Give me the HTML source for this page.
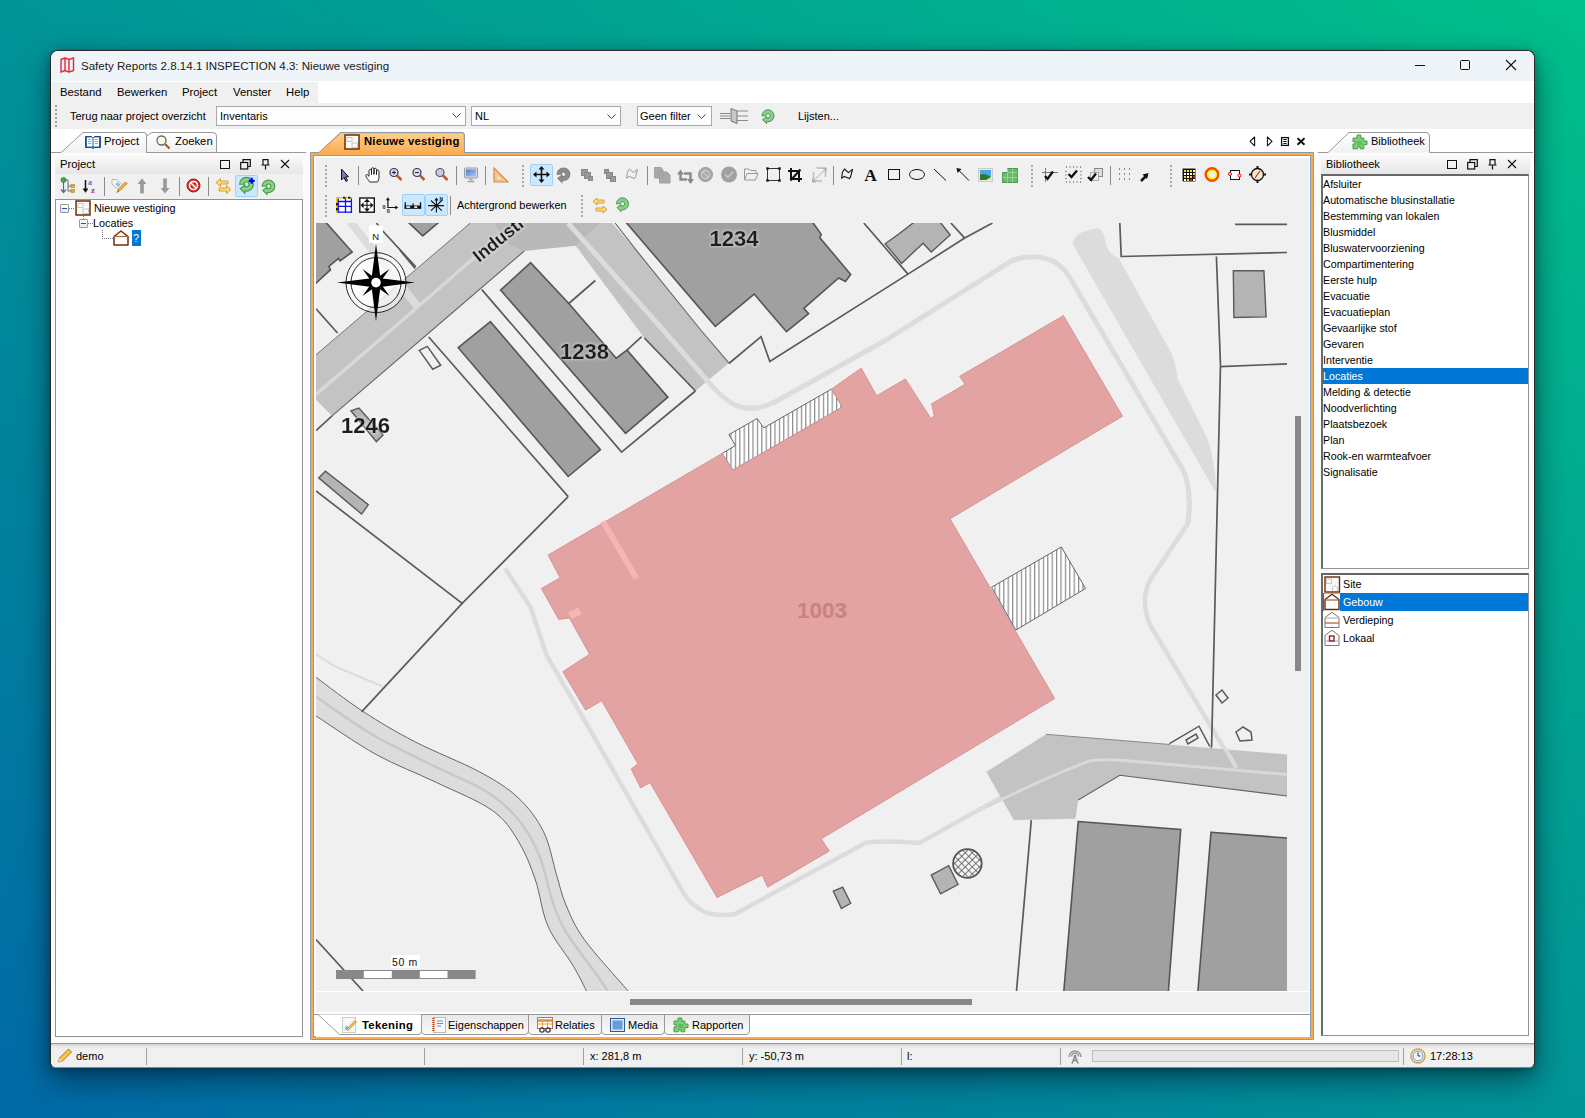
<!DOCTYPE html>
<html><head><meta charset="utf-8">
<style>
*{margin:0;padding:0;box-sizing:border-box}
html,body{width:1585px;height:1118px;overflow:hidden}
body{position:relative;font-family:"Liberation Sans",sans-serif;font-size:11px;color:#000;
background:linear-gradient(to bottom left,#00C08A 0%,#00A990 25%,#009497 50%,#007F9E 75%,#0069A7 100%);}
.a{position:absolute}
.t{position:absolute;white-space:nowrap;line-height:13px}
svg.i{position:absolute;overflow:visible}
#win{left:50px;top:50px;width:1485px;height:1018px;border:1px solid #2a2a2a;border-bottom-color:#8a8580;border-radius:8px 8px 6px 6px;background:#fcfcfc;
box-shadow:0 12px 30px rgba(0,20,40,.55),0 2px 8px rgba(0,0,0,.3)}
</style></head><body>
<svg width="0" height="0" style="position:absolute"><defs>
<symbol id="ref" viewBox="0 0 20 20"><path d="M4 9.8A6 6 0 1 1 10 15.8H8.6V17.7L4.6 13.6L8.6 10.6V12H10A2.2 2.2 0 1 0 7.8 9.8Z" fill="#8ccf8c" stroke="#3f9d3f" stroke-width="1"/></symbol>
<symbol id="refg" viewBox="0 0 20 20"><path d="M4 9.8A6 6 0 1 1 10 15.8H8.6V17.7L4.6 13.6L8.6 10.6V12H10A2.2 2.2 0 1 0 7.8 9.8Z" fill="#8c8c8c" stroke="#808080" stroke-width="1"/></symbol>
<symbol id="puz" viewBox="0 0 20 20"><path d="M3 5H7V2H10.8V5H13.8V8H17V11.6H13.8V15.8H10V13.6H7.8V15.8H3V11H5V8.7H3Z" fill="#7ccc7c" stroke="#45a045" stroke-width="1"/><rect x="7" y="8" width="5" height="4" fill="#62bb62"/></symbol>
</defs></svg>
<div id="win" class="a"></div>
<!-- title bar -->
<div class="a" style="left:51px;top:51px;width:1483px;height:30px;background:#eef4f8;border-radius:7px 7px 0 0"></div>
<div class="a" style="left:51px;top:81px;width:1483px;height:48px;background:#fff"></div>
<div class="a" style="left:51px;top:82px;width:267px;height:21px;background:#f0f0f0"></div>
<div class="a" style="left:51px;top:103px;width:1483px;height:26px;background:#f0f0f0"></div>
<div class="a" style="left:51px;top:129px;width:1483px;height:23px;background:#fff"></div>
<div class="t" style="left:81px;top:60px;font-size:11.55px;color:#1a1a1a">Safety Reports 2.8.14.1 INSPECTION 4.3: Nieuwe vestiging</div>

<!-- window controls -->
<div class="a" style="left:1415px;top:65px;width:10px;height:1px;background:#111"></div>
<div class="a" style="left:1460px;top:60px;width:10px;height:10px;border:1px solid #111;border-radius:1.5px"></div>
<svg class="i" style="left:1506px;top:60px" width="10" height="10"><path d="M0 0L10 10M10 0L0 10" stroke="#111" stroke-width="1.1"/></svg>
<!-- app icon -->
<svg class="i" style="left:60px;top:57px" width="15" height="16" viewBox="0 0 15 16"><path d="M1 2.5L5 0.8L9 2.5L13.5 0.8V13.5L9 15.2L5 13.5L1 15.2Z M5 0.8V13.5 M9 2.5V15.2" fill="none" stroke="#e0283a" stroke-width="1.4" stroke-linejoin="round"/></svg>
<!-- toolbar grip -->
<div class="a" style="left:55px;top:105px;width:2px;height:22px;background:repeating-linear-gradient(#a0a0a0 0 2px,transparent 2px 4px)"></div>
<div class="t" style="left:70px;top:110px">Terug naar project overzicht</div>
<div class="a" style="left:216px;top:106px;width:250px;height:20px;border:1px solid #a9a9a9;background:#fdfdfd"></div>
<div class="t" style="left:220px;top:110px">Inventaris</div>
<svg class="i" style="left:452px;top:113px" width="9" height="6"><path d="M0.5 0.5L4.5 4.5L8.5 0.5" fill="none" stroke="#444" stroke-width="1"/></svg>
<div class="a" style="left:471px;top:106px;width:150px;height:20px;border:1px solid #a9a9a9;background:#fdfdfd"></div>
<div class="t" style="left:475px;top:110px">NL</div>
<svg class="i" style="left:607px;top:114px" width="9" height="6"><path d="M0.5 0.5L4.5 4.5L8.5 0.5" fill="none" stroke="#444" stroke-width="1"/></svg>
<div class="a" style="left:637px;top:106px;width:75px;height:20px;border:1px solid #a9a9a9;background:#fdfdfd"></div>
<div class="t" style="left:640px;top:110px">Geen filter</div>
<svg class="i" style="left:697px;top:114px" width="9" height="6"><path d="M0.5 0.5L4.5 4.5L8.5 0.5" fill="none" stroke="#444" stroke-width="1"/></svg>
<svg class="i" style="left:720px;top:108px" width="28" height="16" viewBox="0 0 28 16"><path d="M0 5.5H10M0 8H10M0 10.5H10M17 3H28M17 8H28M17 12.5H28" stroke="#8a8a8a" stroke-width="1"/><path d="M11 0.5L17 3V15.5L11 13Z" fill="#c8c8c8" stroke="#777" stroke-width="1"/></svg>
<svg class="i" style="left:758px;top:106px" width="20" height="20"><use href="#ref"/></svg>
<div class="t" style="left:798px;top:110px">Lijsten...</div>

<div class="t" style="left:60px;top:86px;font-size:11.3px">Bestand</div>
<div class="t" style="left:117px;top:86px;font-size:11.3px">Bewerken</div>
<div class="t" style="left:182px;top:86px;font-size:11.3px">Project</div>
<div class="t" style="left:233px;top:86px;font-size:11.3px">Venster</div>
<div class="t" style="left:286px;top:86px;font-size:11.3px">Help</div>
<!-- MARK:TOOLBAR -->
<!-- MARK:TABS -->

<!-- left tabs -->
<svg class="i" style="left:51px;top:128px" width="260" height="26" viewBox="51 128 260 26">
<defs><linearGradient id="tabg" x1="0" y1="0" x2="0" y2="1"><stop offset="0" stop-color="#ffffff"/><stop offset="1" stop-color="#f0f0f0"/></linearGradient></defs>
<path d="M61 152.5L83 132.5H144Q146.5 132.5 146.5 135V152.5" fill="url(#tabg)" stroke="#999" stroke-width="1"/>
<path d="M146.5 152.5V136L152 132.5H213Q216.5 132.5 216.5 136V152.5" fill="url(#tabg)" stroke="#999" stroke-width="1"/>
<path d="M51 152.5H61M146.5 152.5H306" stroke="#999" stroke-width="1"/>
</svg>
<svg class="i" style="left:85px;top:136px" width="16" height="13" viewBox="0 0 16 13"><path d="M0.5 0.5H6.5L8 2L9.5 0.5H15.5V11.5H9.5L8 12.5L6.5 11.5H0.5Z" fill="#2d6aa8" stroke="#1b4f86" stroke-width="1"/><rect x="2" y="1.5" width="5.5" height="9" fill="#fff"/><rect x="8.5" y="1.5" width="5.5" height="9" fill="#fff"/><path d="M3 3.5H6.5M3 5.5H6.5M3 7.5H6.5M9.5 3.5H13M9.5 5.5H13M9.5 7.5H13" stroke="#aaa" stroke-width="1"/></svg>
<div class="t" style="left:104px;top:135px;font-size:11.3px">Project</div>
<svg class="i" style="left:156px;top:135px" width="15" height="15" viewBox="0 0 15 15"><circle cx="5.5" cy="5.5" r="4.5" fill="#fdfbe8" stroke="#666" stroke-width="1.3"/><path d="M9 9L13.5 13.5" stroke="#9a5a30" stroke-width="2.2"/></svg>
<div class="t" style="left:175px;top:135px;font-size:11.3px">Zoeken</div>
<!-- left panel header -->
<div class="a" style="left:55px;top:155px;width:248px;height:19px;background:linear-gradient(#fafafa,#e6e6e6)"></div>
<div class="t" style="left:60px;top:158px;font-size:11.3px">Project</div>
<div class="a" style="left:220px;top:160px;width:10px;height:9px;border:1.3px solid #111"></div>
<svg class="i" style="left:240px;top:159px" width="11" height="11" viewBox="0 0 11 11"><path d="M3 3V0.7H10.3V7.5H8" fill="none" stroke="#111" stroke-width="1.2"/><rect x="0.7" y="3.5" width="7" height="6.5" fill="none" stroke="#111" stroke-width="1.2"/></svg>
<svg class="i" style="left:261px;top:159px" width="9" height="11" viewBox="0 0 9 11"><path d="M2 0.7H7V6H2Z M0.5 6H8.5 M4.5 6V10.5" fill="none" stroke="#111" stroke-width="1.2"/></svg>
<svg class="i" style="left:281px;top:160px" width="8" height="8"><path d="M0 0L8 8M8 0L0 8" stroke="#111" stroke-width="1.1"/></svg>
<!-- left toolbar -->
<div class="a" style="left:55px;top:174px;width:248px;height:25px;background:#f0f0f0"></div>
<svg class="i" style="left:60px;top:177px" width="16" height="17" viewBox="0 0 16 17"><circle cx="3.5" cy="3" r="2.5" fill="#4caf50" stroke="#2e7d32" stroke-width=".8"/><path d="M3.5 5V15M1 12.5L3.5 15.5L6 12.5" fill="none" stroke="#5a6a80" stroke-width="1.2"/><path d="M3.5 3H8V14H11M8 9H11" fill="none" stroke="#5a6a80" stroke-width="1"/><rect x="11" y="7.5" width="3.5" height="3" fill="#e0b030" stroke="#b08010" stroke-width=".6"/><rect x="11" y="12.5" width="3.5" height="3" fill="#e0b030" stroke="#b08010" stroke-width=".6"/></svg>
<svg class="i" style="left:83px;top:178px" width="16" height="16" viewBox="0 0 16 16"><path d="M2.5 2V13M0.5 10.5L2.5 13.5L4.5 10.5" fill="none" stroke="#111" stroke-width="1.5"/><text x="5" y="7" font-family="Liberation Serif" font-size="8" fill="#5577cc" font-weight="bold">a</text><text x="8" y="14.5" font-family="Liberation Serif" font-size="9" fill="#aa3399" font-weight="bold">z</text></svg>
<div class="a" style="left:104px;top:177px;width:1px;height:19px;background:#8a8a8a"></div>
<svg class="i" style="left:111px;top:178px" width="17" height="16" viewBox="0 0 17 16"><path d="M1 1.5H6L12 7.5L7.5 12L1 6Z" fill="#f4f4f4" stroke="#bbb" stroke-width="1"/><rect x="5" y="5" width="4" height="3" fill="#7ec0ea" transform="rotate(45 7 6.5)"/><path d="M6 14.5L8 10.5L14.5 4L16 5.5L9.5 12Z" fill="#f5c842" stroke="#c07020" stroke-width="1"/></svg>
<svg class="i" style="left:137px;top:178px" width="10" height="16" viewBox="0 0 10 16"><path d="M5 0.5L9.5 6H6.8V15.5H3.2V6H0.5Z" fill="#999"/></svg>
<svg class="i" style="left:160px;top:178px" width="10" height="16" viewBox="0 0 10 16"><path d="M5 15.5L9.5 10H6.8V0.5H3.2V10H0.5Z" fill="#999"/></svg>
<div class="a" style="left:179px;top:177px;width:1px;height:19px;background:#8a8a8a"></div>
<svg class="i" style="left:186px;top:178px" width="15" height="15" viewBox="0 0 15 15"><circle cx="7.5" cy="7.5" r="6.5" fill="#d82a2a" stroke="#a01818" stroke-width="1"/><circle cx="7.5" cy="7.5" r="4" fill="none" stroke="#fff" stroke-width="1.6"/><path d="M4.7 4.7L10.3 10.3" stroke="#fff" stroke-width="1.6"/></svg>
<div class="a" style="left:208px;top:177px;width:1px;height:19px;background:#8a8a8a"></div>
<svg class="i" style="left:215px;top:178px" width="17" height="16" viewBox="0 0 17 16"><path d="M1 4.5L5.5 0.5V3H13V6H5.5V8.5Z" fill="#f7d97a" stroke="#d09a30" stroke-width=".9"/><path d="M16 11.5L11.5 7.5V10H4V13H11.5V15.5Z" fill="#f7d97a" stroke="#d09a30" stroke-width=".9"/></svg>
<div class="a" style="left:235px;top:175px;width:23px;height:22px;background:#cce8ff;border:1px solid #99d1ff;border-radius:2px"></div>
<svg class="i" style="left:235px;top:173px" width="23" height="23" viewBox="0 0 20 20"><use href="#ref"/><path d="M14.5 4.2V9.4M11.9 6.8H17.1" stroke="#0000ee" stroke-width="1.9"/></svg>
<svg class="i" style="left:258px;top:176px" width="21" height="21" viewBox="0 0 20 20"><use href="#ref"/></svg>
<!-- tree -->
<div class="a" style="left:55px;top:199px;width:248px;height:838px;background:#fff;border:1px solid #8e9299"></div>
<div class="a" style="left:60px;top:204px;width:9px;height:9px;border:1px solid #9a9a9a;border-radius:1px;background:linear-gradient(#fff,#e8e8e8)"></div>
<div class="a" style="left:62px;top:208px;width:5px;height:1px;background:#3050b0"></div>
<div class="a" style="left:69px;top:208px;width:6px;height:1px;background:repeating-linear-gradient(90deg,#777 0 1px,transparent 1px 2px)"></div>
<svg class="i" style="left:75px;top:200px" width="16" height="16" viewBox="0 0 16 16"><rect x="1" y="1" width="14" height="14" fill="#fafafa" stroke="#6e2c08" stroke-width="1.5"/><rect x="3" y="3.5" width="5" height="4" fill="none" stroke="#bbb" stroke-width=".8"/><rect x="8" y="9" width="5.5" height="4.5" fill="none" stroke="#bbb" stroke-width=".8"/></svg>
<div class="t" style="left:94px;top:202px;font-size:10.8px">Nieuwe vestiging</div>
<div class="a" style="left:83px;top:216px;width:1px;height:3px;background:repeating-linear-gradient(#777 0 1px,transparent 1px 2px)"></div>
<div class="a" style="left:79px;top:219px;width:9px;height:9px;border:1px solid #9a9a9a;border-radius:1px;background:linear-gradient(#fff,#e8e8e8)"></div>
<div class="a" style="left:81px;top:223px;width:5px;height:1px;background:#3050b0"></div>
<div class="a" style="left:88px;top:223px;width:5px;height:1px;background:repeating-linear-gradient(90deg,#777 0 1px,transparent 1px 2px)"></div>
<div class="t" style="left:93px;top:217px;font-size:10.8px">Locaties</div>
<div class="a" style="left:102px;top:230px;width:1px;height:9px;background:repeating-linear-gradient(#777 0 1px,transparent 1px 2px)"></div>
<div class="a" style="left:102px;top:238px;width:11px;height:1px;background:repeating-linear-gradient(90deg,#777 0 1px,transparent 1px 2px)"></div>
<svg class="i" style="left:113px;top:230px" width="16" height="16" viewBox="0 0 16 16"><path d="M1 15V6.5L8 1L15 6.5V15Z" fill="#fff" stroke="#6e2c08" stroke-width="1.5" stroke-linejoin="round"/><path d="M1 6.5H15" stroke="#b07040" stroke-width="1.2"/></svg>
<div class="a" style="left:132px;top:230px;width:9px;height:16px;background:#0078d7"></div>
<div class="t" style="left:133px;top:232px;font-size:10.8px;color:#fff">?</div>


<!-- doc tab + frame -->
<svg class="i" style="left:306px;top:128px" width="1012" height="914" viewBox="306 128 1012 914">
<defs><linearGradient id="otab" x1="0" y1="0" x2="0" y2="1"><stop offset="0" stop-color="#ffd08e"/><stop offset="1" stop-color="#fbaa50"/></linearGradient></defs>
<path d="M310.5 1039.5V152.5H319L340.5 132.5H462Q464.5 132.5 464.5 135V152.5H1313.5V1039.5Z" fill="#fbaa50" stroke="#8d9aa8" stroke-width="1"/>
<path d="M320 153.5L340.8 133.5H462Q463.5 133.5 463.5 136V154H320Z" fill="url(#otab)"/>
<rect x="313.5" y="155.5" width="997" height="881" fill="#fff" stroke="#8d9aa8" stroke-width="1"/>
</svg>
<svg class="i" style="left:344px;top:134px" width="16" height="16" viewBox="0 0 16 16"><rect x="1" y="1" width="14" height="14" fill="#fafafa" stroke="#6e2c08" stroke-width="1.5"/><rect x="3" y="3.5" width="5" height="4" fill="none" stroke="#bbb" stroke-width=".8"/><rect x="8" y="9" width="5.5" height="4.5" fill="none" stroke="#bbb" stroke-width=".8"/></svg>
<div class="t" style="left:364px;top:135px;font-size:11.3px;font-weight:bold;letter-spacing:.2px">Nieuwe vestiging</div>
<!-- tab controls -->
<svg class="i" style="left:1249px;top:136px" width="60" height="12" viewBox="0 0 60 12"><path d="M5.6 1V9.8L1 5.4Z" fill="none" stroke="#111" stroke-width="1.1" stroke-linejoin="round"/><path d="M18.4 1V9.8L23 5.4Z" fill="none" stroke="#111" stroke-width="1.1" stroke-linejoin="round"/><rect x="32.6" y="1.6" width="6.8" height="7.8" fill="none" stroke="#111" stroke-width="1.3"/><path d="M34.3 3.5H37.7M34.3 5.5H37.7M34.3 7.5H37.7" stroke="#111" stroke-width="1"/><path d="M48.5 2.3L55.5 8.7M55.5 2.3L48.5 8.7" stroke="#111" stroke-width="1.9"/></svg>
<!-- toolbars area -->
<div class="a" style="left:316px;top:158px;width:993px;height:65px;background:#f0f0f0"></div>
<div class="a" style="left:325px;top:165px;width:2px;height:22px;background:repeating-linear-gradient(#a8a8a8 0 2px,transparent 2px 4px)"></div>
<div class="a" style="left:325px;top:195px;width:2px;height:22px;background:repeating-linear-gradient(#a8a8a8 0 2px,transparent 2px 4px)"></div>
<div class="a" style="left:522px;top:165px;width:2px;height:22px;background:repeating-linear-gradient(#a8a8a8 0 2px,transparent 2px 4px)"></div>
<div class="a" style="left:1031px;top:165px;width:2px;height:22px;background:repeating-linear-gradient(#a8a8a8 0 2px,transparent 2px 4px)"></div>
<div class="a" style="left:1170px;top:165px;width:2px;height:22px;background:repeating-linear-gradient(#a8a8a8 0 2px,transparent 2px 4px)"></div>
<div class="a" style="left:581px;top:195px;width:2px;height:22px;background:repeating-linear-gradient(#a8a8a8 0 2px,transparent 2px 4px)"></div>
<div class="a" style="left:358px;top:166px;width:1px;height:19px;background:#8a8a8a"></div>
<div class="a" style="left:456px;top:166px;width:1px;height:19px;background:#8a8a8a"></div>
<div class="a" style="left:485px;top:166px;width:1px;height:19px;background:#8a8a8a"></div>
<div class="a" style="left:647px;top:166px;width:1px;height:19px;background:#8a8a8a"></div>
<div class="a" style="left:833px;top:166px;width:1px;height:19px;background:#8a8a8a"></div>
<div class="a" style="left:1110px;top:166px;width:1px;height:19px;background:#8a8a8a"></div>
<div class="a" style="left:450px;top:196px;width:1px;height:19px;background:#8a8a8a"></div>
<div class="a" style="left:530px;top:164px;width:23px;height:22px;background:#cce8ff;border:1px solid #99d1ff;border-radius:2px"></div>
<div class="a" style="left:402px;top:194px;width:23px;height:22px;background:#cce8ff;border:1px solid #99d1ff;border-radius:2px"></div>
<div class="a" style="left:425px;top:194px;width:23px;height:22px;background:#cce8ff;border:1px solid #99d1ff;border-radius:2px"></div>
<svg class="i" style="left:316px;top:158px" width="993" height="65" viewBox="316 158 993 65">
<!-- row1 -->
<path d="M341.5 169V180L344 177.5L346 181.5L347.5 180.5L345.5 176.8H348.5Z" fill="#7a7ab8" stroke="#111" stroke-width="1"/>
<path transform="translate(365 166.5)" d="M4.8 15.5C3.4 13.6 1.2 10.8 0.8 9.4C0.5 8.2 1.8 7.6 2.7 8.5L4 9.8V4.2C4 2.6 6.5 2.6 6.5 4.2V8V2.4C6.5 0.8 9 0.8 9 2.4V8V3C9 1.4 11.5 1.4 11.5 3V8V4.8C11.5 3.2 14 3.2 14 4.8V10.5C14 12.8 13.2 14.4 12.4 15.5Z" fill="#fff" stroke="#111" stroke-width=".9" stroke-linejoin="round"/>
<circle cx="394" cy="172.5" r="4" fill="#dde" stroke="#335" stroke-width="1.2"/><path d="M397 175.5L401.5 180" stroke="#b06030" stroke-width="2.5"/><path d="M392 172.5H396M394 170.5V174.5" stroke="#224" stroke-width="1"/>
<circle cx="417" cy="172.5" r="4" fill="#dde" stroke="#335" stroke-width="1.2"/><path d="M420 175.5L424.5 180" stroke="#b06030" stroke-width="2.5"/><path d="M415 172.5H419" stroke="#224" stroke-width="1"/>
<circle cx="440" cy="172.5" r="4" fill="#c8c8e8" stroke="#556" stroke-width="1.2"/><path d="M443 175.5L447.5 180" stroke="#b06030" stroke-width="2.5"/>
<defs><linearGradient id="scr" x1="0" y1="0" x2="1" y2="1"><stop offset="0" stop-color="#4a7ed0"/><stop offset="1" stop-color="#a9cdf2"/></linearGradient></defs><rect x="464.5" y="168" width="13" height="10" rx="1" fill="#dcdcdc" stroke="#9a9a9a" stroke-width="1"/><rect x="466" y="169.5" width="10" height="7" fill="url(#scr)"/><path d="M469.5 179.5H472.5M467.5 181.5H474.5" stroke="#a0a0a0" stroke-width="1.5"/>
<path d="M494 182V168L508 182Z" fill="#f2c890" stroke="#d88a40" stroke-width="1.2"/><path d="M497.5 179V176L500.5 179Z" fill="#f0f0f0"/>
<path d="M541.5 167.5V181.5M534.5 174.5H548.5" stroke="#111" stroke-width="1.6"/><path d="M541.5 166L538.5 169.5H544.5ZM541.5 183L538.5 179.5H544.5ZM533 174.5L536.5 171.5V177.5ZM550 174.5L546.5 171.5V177.5Z" fill="#111"/>
<use href="#refg" x="553" y="164" width="21" height="21"/>
<rect x="581.5" y="169.5" width="6" height="6" fill="#999" stroke="#888"/><rect x="584.5" y="172.5" width="6" height="6" fill="#999" stroke="#888"/><rect x="588.5" y="176.5" width="4" height="4" fill="#999" stroke="#888"/>
<rect x="604.5" y="169.5" width="4" height="4" fill="#999" stroke="#888"/><rect x="606.5" y="172.5" width="6" height="6" fill="#999" stroke="#888"/><rect x="610.5" y="176.5" width="5" height="5" fill="#999" stroke="#888"/>
<path d="M629.5 169L633.5 172.6L637.5 169.4L635.6 176.8L634.5 178.6L629.3 176.4L626.6 178.2L627.4 172.3Z" fill="none" stroke="#9a9a9a" stroke-width="1" stroke-linejoin="round"/>
<path d="M654.5 167.5H661L663 170V178H654.5Z M659.5 172H667L670 175V183H659.5Z" fill="#a8a8a8" stroke="#a0a0a0" stroke-width="1"/>
<path d="M680.5 174V179.5H687M690.5 182V173.5H684" fill="none" stroke="#8a8a8a" stroke-width="2.4"/><path d="M680.5 169.5L677 174.5H684ZM690.5 184L687 179H694Z" fill="#8a8a8a"/>
<circle cx="705.5" cy="174.5" r="7" fill="#a8a8a8" stroke="#999" stroke-width="1"/><circle cx="705.5" cy="174.5" r="4" fill="none" stroke="#ccc" stroke-width="1.3"/><path d="M702.5 171.5L708.5 177.5" stroke="#ccc" stroke-width="1.3"/>
<circle cx="729" cy="174.5" r="8" fill="#a0a0a0"/><path d="M725 174.5L728 177.5L733 171.5" fill="none" stroke="#c4c4c4" stroke-width="1.8"/>
<path d="M744.5 180V169H749L750.5 170.5H756V173" fill="none" stroke="#999" stroke-width="1"/><path d="M744.5 180L747 173.5H758L755.5 180Z" fill="none" stroke="#999" stroke-width="1"/>
<rect x="767.5" y="168.5" width="12" height="12" fill="none" stroke="#222" stroke-width=".9"/><rect x="766.3" y="167.3" width="2.4" height="2.4" fill="#111"/><rect x="778.3" y="167.3" width="2.4" height="2.4" fill="#111"/><rect x="766.3" y="179.3" width="2.4" height="2.4" fill="#111"/><rect x="778.3" y="179.3" width="2.4" height="2.4" fill="#111"/>
<path d="M788 171H799V182M791 168V179H802M790.5 180.5L800.5 169.5" fill="none" stroke="#111" stroke-width="2"/>
<path d="M813.5 172V181H822" fill="none" stroke="#bbb" stroke-width="1.5"/><path d="M816.5 168H825.5V177" fill="none" stroke="#bbb" stroke-width="1.5"/><path d="M812.5 182L826 168.5M812.5 182V178.5M812.5 182H816M826 168.5H822.5M826 168.5V172" stroke="#aaa" stroke-width="1"/>
<path d="M844.5 169L848.5 172.6L852.5 169.4L850.6 176.8L849.5 178.6L844.3 176.4L841.6 178.2L842.4 172.3Z" fill="none" stroke="#111" stroke-width="1.1" stroke-linejoin="round"/>
<text x="864.2" y="180.8" font-family="Liberation Serif" font-weight="bold" font-size="17.5" fill="#111">A</text>
<rect x="888.5" y="169.5" width="11" height="10" fill="none" stroke="#111" stroke-width="1"/>
<ellipse cx="917" cy="174.5" rx="7.5" ry="5" fill="none" stroke="#111" stroke-width="1"/>
<path d="M934 169L946 180.5" stroke="#111" stroke-width="1"/>
<path d="M957.5 169L969 180.5" stroke="#111" stroke-width="1"/><path d="M956.5 168L961.5 169L957.5 173Z" fill="#111"/>
<rect x="978.5" y="168.5" width="14" height="13" fill="#e8e8e8" stroke="#ccc"/><rect x="980" y="170" width="11" height="10" fill="#4aa8e8"/><path d="M980 180V175C983 173 986 174 991 177V180Z" fill="#2a7a2a"/><path d="M986 180L991 177V180Z" fill="#e8e080"/>
<path d="M1007.5 168.5H1017.5V182.5H1002.5V172.5H1007.5Z" fill="#6cb86c" stroke="#4a9a4a" stroke-width="1"/><path d="M1002.5 177.5H1017.5M1007.5 172.5H1017.5M1007.5 168.5V182.5M1012.5 168.5V182.5" stroke="#9ad09a" stroke-width="1"/>
<path d="M1045.5 168V182M1042 172.5H1058" stroke="#777" stroke-width="1"/><path d="M1045 176L1047.5 179L1053 171.5" fill="none" stroke="#111" stroke-width="2.3"/>
<path d="M1066 167H1082M1066 182H1082" stroke="#333" stroke-width="1" stroke-dasharray="1 2.5"/><path d="M1066 171V179M1081 171V179" stroke="#333" stroke-width="1" stroke-dasharray="1 2.5"/><path d="M1068.5 174L1071.5 177L1077 170.5" fill="none" stroke="#111" stroke-width="2.3"/>
<rect x="1094.5" y="168.5" width="8" height="8" fill="#ddd" stroke="#888"/><rect x="1090.5" y="172.5" width="8" height="8" fill="#eee" stroke="#aaa"/><path d="M1088 177L1091 180L1096 173.5" fill="none" stroke="#111" stroke-width="2.3"/>
<path d="M1119 169H1131M1119 174H1131M1119 179H1131" stroke="#222" stroke-width="1" stroke-dasharray="1 4"/>
<path d="M1141 181L1147 175" stroke="#111" stroke-width="2.5"/><path d="M1148.5 173L1142.5 174.5L1147 179Z" fill="#111"/>
<rect x="1181.5" y="167.5" width="15" height="15" fill="#fff"/><rect x="1182.5" y="168.5" width="13" height="13" fill="#111"/>
<path d="M1184 170h2v2h-2zM1187 170h2v2h-2zM1190 170h2v2h-2zM1193 173h2v2h-2zM1184 176h2v2h-2zM1190 176h2v2h-2zM1187 179h2v2h-2z" fill="#f8e020"/><path d="M1187 173h2v2h-2zM1190 173h2v2h-2zM1184 173h2v2h-2zM1184 179h2v2h-2zM1193 179h2v2h-2zM1187 176h2v2h-2zM1193 170h2v2h-2z" fill="#fff"/><path d="M1190 179h2v2h-2zM1193 176h2v2h-2z" fill="#e02020"/>
<circle cx="1212" cy="174.5" r="6" fill="none" stroke="#f40" stroke-width="3"/><circle cx="1212" cy="174.5" r="4.2" fill="none" stroke="#ff0" stroke-width="1.8"/>
<rect x="1230.5" y="170.5" width="9" height="9" fill="#fff" stroke="#111"/><circle cx="1230" cy="174" r="1.5" fill="#fff" stroke="#d00"/><circle cx="1239.5" cy="175.5" r="1.5" fill="#fff" stroke="#d00"/>
<circle cx="1257.5" cy="174.5" r="6" fill="#f5ecd0" stroke="#111" stroke-width="1.3"/><path d="M1257.5 166V169M1257.5 180V183M1249 174.5H1252M1263 174.5H1266" stroke="#111" stroke-width="2"/><path d="M1255 178L1260 171" stroke="#e02020" stroke-width="1.2"/>
<!-- row2 -->
<rect x="336" y="197" width="16" height="16" fill="#f8c800"/><rect x="337.5" y="198.5" width="14.5" height="14.5" fill="#fff"/>
<path d="M338.3 198.5V213M345.5 198.5V213M351.4 198.5V213M337.5 201.5H352M337.5 206.4H352M337.5 212.1H352" stroke="#1010f0" stroke-width="1.3"/>
<rect x="348" y="196.8" width="2.4" height="1.8" fill="#111"/><rect x="343" y="196.8" width="2.4" height="1.8" fill="#111"/><rect x="336" y="203" width="1.8" height="2.4" fill="#111"/><rect x="336" y="208" width="1.8" height="2.4" fill="#111"/>
<rect x="359.8" y="198" width="14.5" height="14.2" fill="#fff" stroke="#111" stroke-width="1.4"/>
<path d="M367 200V210.5M361.5 205.3H372.5" stroke="#111" stroke-width="1.1"/><path d="M367 198.8L364 202H370ZM367 211.8L364 208.6H370ZM360.6 205.3L363.6 202.3V208.3ZM373.4 205.3L370.4 202.3V208.3Z" fill="#111"/>
<path d="M387.9 199V207.5H396.5" fill="none" stroke="#111" stroke-width="1.2"/><path d="M387.9 197.2L385.9 200.2H389.9ZM398.3 207.5L395.3 205.5V209.5Z" fill="#111"/>
<text x="382.6" y="209" font-size="5.5" font-weight="bold" font-family="Liberation Sans" fill="#111">0</text><text x="386.8" y="212.8" font-size="5.5" font-weight="bold" font-family="Liberation Sans" fill="#111">0</text>
<path d="M405.3 202.2V208.7M420.5 202.2V208.7M413.1 203.4V206" stroke="#111" stroke-width="1.3"/><rect x="404.7" y="205.5" width="16.4" height="3.3" fill="#111"/><rect x="406.3" y="206.3" width="3.8" height="1.6" fill="#fff"/><rect x="414.2" y="206.3" width="3" height="1.6" fill="#fff"/>
<path d="M436.4 199V212.4M428 205.6H443.9M431 200.5L441.8 210.7M431 210.7L441.8 200.5" stroke="#111" stroke-width="1.1"/><path d="M436.4 197.5L434.3 200.5H438.5Z" fill="#111"/>
<text x="439.6" y="201.2" font-size="4.8" font-weight="bold" font-family="Liberation Sans" fill="#111">N</text>
<path d="M593 201.5L597 198V200H604V203H597V205Z" fill="#f7d97a" stroke="#d09a30" stroke-width=".9"/><path d="M607 209.5L603 206V208H596V211H603V213Z" fill="#f7d97a" stroke="#d09a30" stroke-width=".9"/>
<use href="#ref" x="612.5" y="194" width="20" height="20"/>
</svg>
<div class="t" style="left:457px;top:199px;font-size:10.9px">Achtergrond bewerken</div>
<!-- map container -->
<div class="a" style="left:316px;top:223px;width:993px;height:789px;background:#f0f0f0"></div>

<svg class="i" style="left:316px;top:223px" width="971" height="768" viewBox="316 223 971 768">
<defs>
<clipPath id="mc"><rect x="316" y="223" width="971" height="768"/></clipPath>
<pattern id="hatch" patternUnits="userSpaceOnUse" width="4.4" height="10"><rect width="4.4" height="10" fill="#fff"/><rect x="0" y="0" width="1.2" height="10" fill="#8a8a8a"/></pattern>
<pattern id="xh" patternUnits="userSpaceOnUse" width="5" height="5" patternTransform="rotate(45)"><rect width="5" height="5" fill="#f4f4f4"/><path d="M0 0H5M0 0V5" stroke="#555" stroke-width="1.5"/></pattern>
<filter id="halo" x="-20%" y="-20%" width="140%" height="140%"><feMorphology operator="dilate" radius="1.2" in="SourceAlpha" result="d"/><feGaussianBlur in="d" stdDeviation="1" result="b"/><feFlood flood-color="#ffffff" flood-opacity=".35"/><feComposite in2="b" operator="in" result="h"/><feMerge><feMergeNode in="h"/><feMergeNode in="SourceGraphic"/></feMerge></filter>
</defs>
<g clip-path="url(#mc)">
<rect x="316" y="223" width="971" height="768" fill="#f0f0f0"/>
<!-- main road Industr -->
<path d="M316 354.8L470.3 223H560L524.2 251L453 313L332.1 415.9L316 399.8Z" fill="#c3c3c3"/>
<path d="M493.9 223H601.4L575.7 245.7L524.2 251L509 244.2Z" fill="#b9b9b9"/>
<path d="M316 394.4L391.1 330L474.2 257.8" stroke="#d8d8d8" stroke-width="3.5" fill="none"/>
<path d="M316 354.8L470.3 223" stroke="#777" stroke-width="1" fill="none"/>
<path d="M332.1 415.9L524.2 251" stroke="#666" stroke-width="1.1" fill="none"/>
<!-- road going down-right -->
<path d="M575.7 245.7L601.4 223H612L640 254.8L700.7 330L728.9 362.9L695.4 391L644.4 338Z" fill="#c3c3c3"/>
<path d="M615 223L640 254.8L700.7 330L728.9 362.9" stroke="#666" stroke-width="1.1" fill="none"/>
<!-- light line thin top-left -->
<path d="M349 220L418 307" stroke="#dcdcdc" stroke-width="8" fill="none"/>
<!-- driveway curves -->
<path d="M568 223L663.2 330L708.8 382.3Q722 398 735 405Q752 413 775 402L884.3 341L1011.4 260.9Q1034 252 1055 262Q1064 268 1070 278L1182.9 469.9Q1192 488 1188.2 523" stroke="#dcdcdc" stroke-width="5" fill="none"/>
<path d="M1190.2 500L1187.5 524.1L1149.9 580.5Q1140 600 1150 625L1235.8 768.3L1240 780" stroke="#dcdcdc" stroke-width="4.5" fill="none"/>
<path d="M505.1 568.4L530.6 607.3L546.7 655.6L584.3 720L680.9 888.5Q688 902 697 907.3Q710 918 735 914L865.5 842.9Q880 840 919.2 842.9L1016 789.3L1089 761.1" stroke="#dcdcdc" stroke-width="4.5" fill="none"/>
<path d="M316 654.3L334.8 666.3L383 686.5" stroke="#dcdcdc" stroke-width="2" fill="none"/>
<!-- tapered gray shape top right -->
<path d="M1072.9 244.5Q1072 232 1097 228.4Q1103 228 1105 240Q1108 255 1118.5 257.9L1172.2 354.5Q1176 365 1177.5 378.6L1207 437.7Q1215 460 1216.4 491.3L1215.1 491.3Z" fill="#dcdcdc"/>
<!-- curved road left bottom -->
<path d="M300.0 665.0 C302.7 667.0 305.4 669.5 316.0 677.3 C326.6 685.1 346.8 700.9 363.3 711.6 C379.8 722.3 395.5 731.7 414.8 741.7 C434.1 751.7 462.0 762.4 479.2 771.7 C496.4 781.0 507.2 787.5 517.9 797.5 C528.6 807.5 537.2 818.9 543.6 831.8 C550.0 844.7 552.8 862.5 556.5 874.7 C560.2 886.9 561.4 894.2 566.0 905.0 C570.6 915.8 574.1 925.3 584.3 939.5 C594.5 953.7 618.9 980.2 627.2 990.0 C635.5 999.8 632.9 996.7 634.0 998.0 L590.0 998.0 C587.2 992.7 580.5 978.3 573.5 966.3 C566.5 954.3 554.4 940.8 548.0 926.2 C541.6 911.7 540.1 893.3 535.1 879.0 C530.1 864.7 525.1 851.9 517.9 840.4 C510.7 828.9 505.7 820.0 492.1 810.3 C478.5 800.6 455.6 791.7 436.3 782.4 C417.0 773.1 396.2 765.6 376.2 754.5 C356.1 743.4 328.7 724.1 316.0 715.9 C303.3 707.6 302.7 706.8 300.0 705.0 Z" fill="#dcdcdc" stroke="#666" stroke-width="1"/>
<path d="M300.0 685.0 C302.7 686.9 304.4 688.6 316.0 696.6 C327.6 704.6 351.4 722.1 369.7 733.0 C387.9 743.9 406.2 752.3 425.5 762.0 C444.8 771.7 470.2 781.5 485.6 791.0 C501.0 800.5 508.9 808.3 517.9 819.0 C526.8 829.7 533.6 841.8 539.3 855.4 C545.0 869.0 547.8 887.6 552.2 900.4 C556.7 913.2 558.2 919.1 566.0 932.0 C573.8 944.9 591.3 967.0 599.0 978.0 C606.7 989.0 609.8 994.7 612.0 998.0" stroke="#c8c8c8" stroke-width="2.5" fill="none"/>
<!-- bottom right road -->
<path d="M986.3 771.8L1046 734.3L1287 754.4V796L1119.8 775.3L1078.2 800L1075.5 818.8L1013.8 820.1Z" fill="#c3c3c3"/>
<path d="M987 806.7Q1040 780 1089 761.1Q1105 759 1121.2 760.3L1287 774.5" stroke="#d8d8d8" stroke-width="3" fill="none"/>
<path d="M1046 734.3L1170 744.5" stroke="#888" stroke-width="1" fill="none"/>
<path d="M1119.8 775.3L1287 796M1119.8 775.3L1078.2 800" stroke="#666" stroke-width="1.1" fill="none"/>
<path d="M1225 748L1236.5 768" stroke="#dcdcdc" stroke-width="4" fill="none"/>
<!-- parcel lines -->
<g stroke="#5a5a5a" stroke-width="1.7" fill="none">
<path d="M376.4 223L382.8 231L415.8 266.9"/>
<path d="M316 308.8L337.5 333"/>
<path d="M316 430.6L332.1 415.9"/>
<path d="M400 250.3L415.1 268.4"/>
<path d="M481.8 289.6L621.6 452.1L695.4 391"/>
<path d="M428.7 337L568.2 496.6"/>
<path d="M316 491L462.2 603.3L568.2 496.6"/>
<path d="M462.2 603.3L361.6 711.9"/>
<path d="M316 939.5L363 991"/>
<path d="M568.8 303.5L595.3 280.5"/>
<path d="M627 350.1L641.7 336.7"/>
<path d="M728.9 363.5L761.1 336.7L769.8 361.5L908 274.1L964.7 238.1L992.5 223"/>
<path d="M863.8 223L908 274.1"/>
<path d="M950.9 223L964.7 238.1"/>
<path d="M1119.8 223L1121.2 256.5L1287 252.5"/>
<path d="M1216.4 256.5L1220.5 365.2L1211.6 746.8"/>
<path d="M1220.5 366.6L1287 363.9"/>
<path d="M1235 224.3H1287"/>
<path d="M1031.3 820.1L1016.5 991"/>
<path d="M1211.6 746.8L1211 747.7"/>
<path d="M644.4 338L695.4 391"/>
</g>
<!-- dark buildings -->
<g fill="#a0a0a0" stroke="#555" stroke-width="1.6">
<path d="M312 220H323.8L352.2 252L340.1 260.8L338.5 258.4L328.9 266.5L330.5 269.7L312 287Z"/>
<path d="M405.8 220L422.7 235.9L441.5 220Z"/>
<path d="M458.2 347.7L490.4 321.7L600.4 449.7L568.2 476.5Z"/>
<path d="M500.6 290.1L530.6 262.7L568.8 303.5L616.2 358.2L627 350.1L667.9 397.1L625.6 433.3Z"/>
<path d="M624 220L715.3 326.3L754.2 294.1L786.4 331.7L808.6 313.7L803.8 308.3L838.7 278L845.4 281.5L850.7 274.5L819.9 237.8L821.2 234.3L811 220Z"/>
<path d="M1078.2 821.5L1180.7 829.5L1168.1 995H1063.5Z"/>
<path d="M1211 832.2L1290 838.3V995H1197.6Z"/>
</g>
<!-- light buildings -->
<g fill="#b4b4b4" stroke="#5a5a5a" stroke-width="1.4">
<path d="M885.2 243.8L899.1 233.7L917 220H938.5L950.2 235L931.3 252L923.1 243.2L901.6 263.4Z"/>
<path d="M1233.3 270.8H1263.9L1266.1 316.9L1233.9 317.5Z"/>
<path d="M350.9 410.8L358.9 408.1L383.1 435L376.4 441.6Z"/>
<path d="M318.7 477.9L325.4 471.2L368.3 504.7L361.6 514.1Z"/>
<path d="M833.3 891.2L842.7 887.2L850.7 903.3L841.4 908.6Z"/>
<path d="M931.2 875.1L948.7 865.7L958 884.5L940.6 893.9Z"/>
</g>
<g fill="none" stroke="#5a5a5a" stroke-width="1.5">
<path d="M419.3 350.4L427.3 346.4L440.7 365.2L432.7 369.2Z"/>
<path d="M1216 695L1222 690L1228 698L1222 703Z"/>
<path d="M1236 732L1243 727L1251 732L1252 740L1240 741Z"/>
<path d="M1169.5 743.7L1199 726.2L1209.7 746.3"/>
<path d="M1186 740L1196 734L1198 738L1188 744Z"/>
</g>
<circle cx="967.4" cy="863.5" r="14.3" fill="url(#xh)" stroke="#555" stroke-width="1.8"/>
<!-- hatched -->
<path d="M991.6 587.2L1061.4 547L1085.5 588.5L1015.8 630.1Z" fill="url(#hatch)" stroke="#666" stroke-width="1"/>
<path d="M722.2 453.4L735.6 445.4L728.9 434.6L757.1 418.5L763.8 427.9L831.6 389L842.4 407.1L732.9 470.2Z" fill="url(#hatch)" stroke="#666" stroke-width="1"/>
<!-- pink building -->
<path d="M548.1 555L722.2 453.4L732.9 470.2L842.4 407.1L831.6 389L861.2 368.2L876.6 395.7L905.4 379L930.9 418.5L934.3 415.8L931.6 403.8L965.1 384.3L959.7 376.3L1063.5 315.6L1122.5 416.2L950 518.8L1054.7 698.5L821.2 838.9L829.3 851L767.6 887.2L762.2 875.1L717 897.5L650 782.6L640.6 787.9L631.2 769.1L637.9 763.8L601.7 700.7L585.6 710.1L562.8 671.7L589.6 654.3L569.5 618L558.8 619.4L541.4 588.5L560.1 577.8Z" fill="#e3a3a3" stroke="#d99393" stroke-width="1"/>
<path d="M603 521.5L636.5 578.5" stroke="#f6b4b4" stroke-width="6"/>
<path d="M568 613L578 607L582 614L572 619Z" fill="#f6b4b4"/>
<text x="797" y="618" font-family="Liberation Sans" font-weight="bold" font-size="22.5" fill="#c88282">1003</text>
<!-- labels -->
<g font-family="Liberation Sans" font-weight="bold" font-size="22" fill="#1e1e1e" stroke="#1e1e1e" stroke-width=".2" filter="url(#halo)">
<text x="709.5" y="245.5">1234</text>
<text x="560" y="358.5">1238</text>
<text x="341" y="432.5">1246</text>
<text x="0" y="0" font-size="18" transform="translate(479 263) rotate(-39)">Industr</text>
</g>
<!-- compass -->
<g transform="translate(376 282.6)">
<circle r="30" fill="#fff" fill-opacity=".55" stroke="#111" stroke-width=".9"/>
<circle r="25" fill="#fff" fill-opacity=".4" stroke="#111" stroke-width=".9"/>
<path d="M0 -39L4.4 -4.4L39 0L4.4 4.4L0 39L-4.4 4.4L-39 0L-4.4 -4.4Z" fill="#000"/>
<path d="M13.5 -13.5L3 -6L6 -3ZM13.5 13.5L6 3L3 6ZM-13.5 13.5L-3 6L-6 3ZM-13.5 -13.5L-6 -3L-3 -6Z" fill="#000"/>
<path d="M0 -8L5 0L0 8L-5 0Z M-8 0L0 -5L8 0L0 5Z" fill="#000"/>
<circle r="4.8" fill="#fff"/>
</g>
<rect x="369" y="225.4" width="14" height="17.3" fill="#fff"/>
<text x="372.2" y="240" font-family="Liberation Sans" font-size="9.5" fill="#111">N</text>
<!-- scale bar -->
<rect x="336" y="970" width="139.6" height="9" fill="#888"/>
<rect x="363.8" y="971" width="28" height="7" fill="#fff"/>
<rect x="419.8" y="971" width="27.7" height="7" fill="#fff"/>
<rect x="391" y="955" width="29" height="13" fill="#fff"/>
<text x="392" y="966" font-family="Liberation Sans" font-size="10.5" fill="#111" letter-spacing=".6">50 m</text>
</g>
</svg>

<div class="a" style="left:316px;top:991px;width:993px;height:1px;background:#fff"></div>
<div class="a" style="left:630px;top:999px;width:342px;height:6px;background:#888"></div>
<div class="a" style="left:1295px;top:416px;width:6px;height:255px;background:#888"></div>
<div class="a" style="left:316px;top:1012px;width:994px;height:25px;background:#fff"></div>
<div class="a" style="left:316px;top:1014px;width:994px;height:1px;background:#a0a0a0"></div>

<svg class="i" style="left:314px;top:1010px" width="1000" height="30" viewBox="314 1010 1000 30">
<defs><linearGradient id="btab" x1="0" y1="0" x2="0" y2="1"><stop offset="0" stop-color="#e8e8e8"/><stop offset="1" stop-color="#fbfbfb"/></linearGradient></defs>
<path d="M421.5 1014.5V1031Q421.5 1034.5 425 1034.5H525Q528.5 1034.5 528.5 1031V1014.5" fill="url(#btab)" stroke="#999" stroke-width="1"/>
<path d="M528.5 1014.5V1031Q528.5 1034.5 532 1034.5H598Q601.5 1034.5 601.5 1031V1014.5" fill="url(#btab)" stroke="#999" stroke-width="1"/>
<path d="M601.5 1014.5V1031Q601.5 1034.5 605 1034.5H661Q664.5 1034.5 664.5 1031V1014.5" fill="url(#btab)" stroke="#999" stroke-width="1"/>
<path d="M664.5 1014.5V1031Q664.5 1034.5 668 1034.5H746Q749.5 1034.5 749.5 1031V1014.5" fill="url(#btab)" stroke="#999" stroke-width="1"/>
<path d="M314 1014.5H318L339.5 1034.5H418Q421.5 1034.5 421.5 1031V1014.5H1310" fill="#fff" stroke="#999" stroke-width="1"/>
</svg>
<svg class="i" style="left:342px;top:1017px" width="15" height="16" viewBox="0 0 15 16"><rect x="0.5" y="0.5" width="13" height="15" fill="#f8f8f8" stroke="#ccc"/><path d="M3 13Q2 9 5 9Q7 9 6 12Z" fill="#8ab8e8"/><path d="M4.5 12.5L13 3.5L14.5 5L6 13.5Z" fill="#f0d060" stroke="#b08020" stroke-width=".8"/></svg>
<div class="t" style="left:362px;top:1019px;font-size:11.3px;font-weight:bold;letter-spacing:.3px">Tekening</div>
<svg class="i" style="left:432px;top:1017px" width="14" height="16" viewBox="0 0 14 16"><rect x="1.5" y="0.5" width="12" height="15" fill="#fafafa" stroke="#bbb"/><path d="M1.5 1V15" stroke="#c05020" stroke-width="2.5" stroke-dasharray="1 1"/><path d="M5 4H11M5 6.5H11M5 9H9" stroke="#5a8ad8" stroke-width="1.2"/></svg>
<div class="t" style="left:448px;top:1019px;font-size:11px">Eigenschappen</div>
<svg class="i" style="left:537px;top:1017px" width="16" height="16" viewBox="0 0 16 16"><rect x="0.5" y="0.5" width="15" height="11" fill="#fff" stroke="#c87820"/><path d="M0.5 3.5H15.5" stroke="#e09030" stroke-width="2.5"/><path d="M0.5 7H15.5M5.5 3V11.5M10.5 3V11.5" stroke="#e0a050" stroke-width="1"/><circle cx="5" cy="13" r="2.2" fill="none" stroke="#335" stroke-width="1.2"/><circle cx="11" cy="13" r="2.2" fill="none" stroke="#335" stroke-width="1.2"/></svg>
<div class="t" style="left:555px;top:1019px;font-size:11px">Relaties</div>
<svg class="i" style="left:610px;top:1018px" width="15" height="14" viewBox="0 0 15 14"><rect x="0.5" y="0.5" width="14" height="13" fill="#d8e8f8" stroke="#2a5a9a"/><rect x="2.5" y="2.5" width="10" height="9" fill="#6a9ad8"/></svg>
<div class="t" style="left:628px;top:1019px;font-size:11px">Media</div>
<svg class="i" style="left:671px;top:1016px" width="20" height="20"><use href="#puz"/></svg>
<div class="t" style="left:692px;top:1019px;font-size:11px">Rapporten</div>


<!-- MARK:MAP -->

<!-- right tabs -->
<svg class="i" style="left:1314px;top:128px" width="222" height="26" viewBox="1314 128 222 26">
<path d="M1328 152.5L1349 132.5H1426Q1429.5 132.5 1429.5 136V152.5" fill="url(#tabg)" stroke="#999" stroke-width="1"/>
<path d="M1318 152.5H1328M1429.5 152.5H1533" stroke="#999" stroke-width="1"/>
</svg>
<svg class="i" style="left:1350px;top:133px" width="20" height="20"><use href="#puz"/></svg>
<div class="t" style="left:1371px;top:135px;font-size:11px">Bibliotheek</div>
<div class="a" style="left:1321px;top:155px;width:209px;height:19px;background:linear-gradient(#fafafa,#e6e6e6)"></div>
<div class="t" style="left:1326px;top:158px;font-size:11px">Bibliotheek</div>
<div class="a" style="left:1447px;top:160px;width:10px;height:9px;border:1.3px solid #111"></div>
<svg class="i" style="left:1467px;top:159px" width="11" height="11" viewBox="0 0 11 11"><path d="M3 3V0.7H10.3V7.5H8" fill="none" stroke="#111" stroke-width="1.2"/><rect x="0.7" y="3.5" width="7" height="6.5" fill="none" stroke="#111" stroke-width="1.2"/></svg>
<svg class="i" style="left:1488px;top:159px" width="9" height="11" viewBox="0 0 9 11"><path d="M2 0.7H7V6H2Z M0.5 6H8.5 M4.5 6V10.5" fill="none" stroke="#111" stroke-width="1.2"/></svg>
<svg class="i" style="left:1508px;top:160px" width="8" height="8"><path d="M0 0L8 8M8 0L0 8" stroke="#111" stroke-width="1.1"/></svg>
<div class="a" style="left:1321px;top:174px;width:208px;height:395px;background:#fff;border:1px solid #8e9299;border-top:2px solid #666;border-left:2px solid #6a6a6a"></div>
<div class="a" style="left:1323px;top:368px;width:205px;height:16px;background:#0078d7"></div>
<div class="t" style="left:1323px;top:176px;font-size:10.7px;line-height:16px">Afsluiter<br>Automatische blusinstallatie<br>Bestemming van lokalen<br>Blusmiddel<br>Bluswatervoorziening<br>Compartimentering<br>Eerste hulp<br>Evacuatie<br>Evacuatieplan<br>Gevaarlijke stof<br>Gevaren<br>Interventie<br><span style="color:#fff">Locaties</span><br>Melding &amp; detectie<br>Noodverlichting<br>Plaatsbezoek<br>Plan<br>Rook-en warmteafvoer<br>Signalisatie</div>
<div class="a" style="left:1321px;top:573px;width:208px;height:463px;background:#fff;border:1px solid #8e9299;border-top:2px solid #666;border-left:2px solid #6a6a6a"></div>
<div class="a" style="left:1323px;top:593px;width:205px;height:18px;background:#0078d7"></div>
<svg class="i" style="left:1324px;top:576px" width="17" height="72" viewBox="0 0 17 72">
<rect x="1" y="1" width="14.5" height="15" fill="#fafafa" stroke="#6e2c08" stroke-width="1.4"/><rect x="2.5" y="3" width="5" height="4.5" fill="none" stroke="#bbb" stroke-width=".8"/><path d="M8.5 15V11.5L11 9.5L13.5 11.5V15" fill="none" stroke="#bbb" stroke-width=".8"/>
<rect x="0" y="17.5" width="16" height="17.5" fill="#fff"/><path d="M1 33.5V23.5L8 18.3L15 23.5V33.5Z" fill="#fff" stroke="#6e2c08" stroke-width="1.4" stroke-linejoin="round"/><path d="M1 24H15" stroke="#a06030" stroke-width="1.2"/>
<path d="M1 51.5V41.5L8 36.3L15 41.5V51.5Z" fill="#fff" stroke="#777" stroke-width="1" stroke-linejoin="round"/><path d="M1 42H15" stroke="#aaa" stroke-width="1"/><path d="M1 47H15" stroke="#a06030" stroke-width="1.2"/>
<path d="M1 69.5V59.5L8 54.3L15 59.5V69.5Z" fill="#fff" stroke="#777" stroke-width="1" stroke-linejoin="round"/><path d="M1 65H15" stroke="#aaa" stroke-width="1"/><rect x="5.5" y="60" width="4.5" height="5" fill="none" stroke="#901010" stroke-width="1.3"/>
</svg>
<div class="t" style="left:1343px;top:575px;font-size:10.7px;line-height:18px">Site<br><span style="color:#fff">Gebouw</span><br>Verdieping<br>Lokaal</div>


<div class="a" style="left:51px;top:1043px;width:1483px;height:24px;background:linear-gradient(#999 0,#999 1px,#cdcdcd 1px,#e6e6e6 3px,#f0f0f0 6px);border-radius:0 0 5px 5px"></div>
<svg class="i" style="left:57px;top:1048px" width="16" height="15" viewBox="0 0 16 15"><path d="M1 14L2.5 10L11.5 1L14.5 4L5.5 13Z" fill="#f5c842" stroke="#b07020" stroke-width="1"/><path d="M1 14L2.5 10L5.5 13Z" fill="#f0d8b0"/></svg>
<div class="t" style="left:76px;top:1050px;font-size:11px">demo</div>
<div class="a" style="left:146px;top:1048px;width:1px;height:17px;background:#a0a0a0"></div>
<div class="a" style="left:424px;top:1048px;width:1px;height:17px;background:#a0a0a0"></div>
<div class="a" style="left:583px;top:1048px;width:1px;height:17px;background:#a0a0a0"></div>
<div class="t" style="left:590px;top:1050px;font-size:11px">x: 281,8 m</div>
<div class="a" style="left:742px;top:1048px;width:1px;height:17px;background:#a0a0a0"></div>
<div class="t" style="left:749px;top:1050px;font-size:11px">y: -50,73 m</div>
<div class="a" style="left:901px;top:1048px;width:1px;height:17px;background:#a0a0a0"></div>
<div class="t" style="left:907px;top:1050px;font-size:11px">l:</div>
<div class="a" style="left:1060px;top:1048px;width:1px;height:17px;background:#a0a0a0"></div>
<svg class="i" style="left:1066px;top:1048px" width="18" height="16" viewBox="0 0 18 16"><path d="M3 9A6 6 0 1 1 15 9M5.5 8.5A3.5 3.5 0 1 1 12.5 8.5" fill="none" stroke="#999" stroke-width="1.6"/><path d="M9 8L6 15.5M9 8L12 15.5M7 12.5H11" stroke="#888" stroke-width="1.5"/><circle cx="9" cy="8" r="1.3" fill="#888"/></svg>
<div class="a" style="left:1092px;top:1050px;width:307px;height:12px;background:#e6e6e6;border:1px solid #bcbcbc"></div>
<div class="a" style="left:1403px;top:1048px;width:1px;height:17px;background:#a0a0a0"></div>
<svg class="i" style="left:1410px;top:1048px" width="16" height="16" viewBox="0 0 16 16"><circle cx="8" cy="8" r="7" fill="#fff" stroke="#d0a040" stroke-width="1.5"/><circle cx="8" cy="8" r="5" fill="#eef4fa" stroke="#6a8ab8" stroke-width="1"/><path d="M8 4.5V8H10.5" fill="none" stroke="#335" stroke-width="1"/></svg>
<div class="t" style="left:1430px;top:1050px;font-size:11px">17:28:13</div>

</body></html>
